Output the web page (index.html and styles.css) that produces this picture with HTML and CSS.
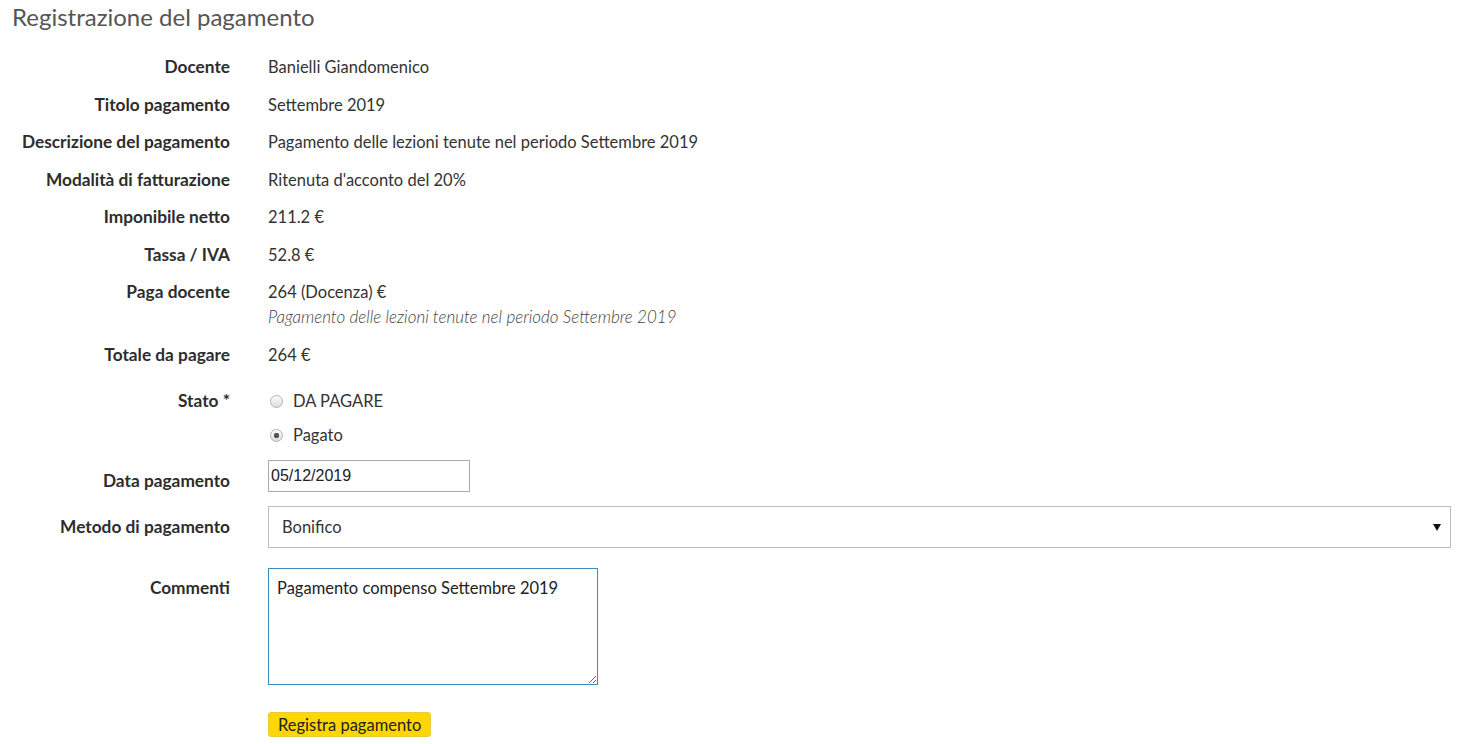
FILE: index.html
```html
<!doctype html>
<html>
<head>
  <title>Registrazione del pagamento</title>
  <link rel="stylesheet" href="styles.css">
</head>
<body>
  <div class="page">
    <h1 class="page-title">Registrazione del pagamento</h1>
    <form class="payment-form">
      <div class="info-rows">
        <div class="row"><div class="row-label">Docente</div><div class="row-value">Banielli Giandomenico</div></div>
        <div class="row"><div class="row-label">Titolo pagamento</div><div class="row-value">Settembre 2019</div></div>
        <div class="row"><div class="row-label">Descrizione del pagamento</div><div class="row-value">Pagamento delle lezioni tenute nel periodo Settembre 2019</div></div>
        <div class="row"><div class="row-label">Modalità di fatturazione</div><div class="row-value">Ritenuta d'acconto del 20%</div></div>
        <div class="row"><div class="row-label">Imponibile netto</div><div class="row-value">211.2 €</div></div>
        <div class="row"><div class="row-label">Tassa / IVA</div><div class="row-value">52.8 €</div></div>
        <div class="row">
          <div class="row-label">Paga docente</div>
          <div class="row-value">
            <div>264 (Docenza) €</div>
            <div class="row-note">Pagamento delle lezioni tenute nel periodo Settembre 2019</div>
          </div>
        </div>
        <div class="row"><div class="row-label">Totale da pagare</div><div class="row-value">264 €</div></div>
      </div>

      <div class="row row-state">
        <div class="row-label">Stato *</div>
        <div class="row-value radio-list">
          <label class="radio-option"><input type="radio" name="stato" value="da_pagare"> DA PAGARE</label>
          <label class="radio-option"><input type="radio" name="stato" value="pagato" checked> Pagato</label>
        </div>
      </div>

      <div class="row row-date">
        <div class="row-label">Data pagamento</div>
        <div class="row-value"><input class="date-input" type="text" value="05/12/2019"></div>
      </div>

      <div class="row row-method">
        <div class="row-label">Metodo di pagamento</div>
        <div class="row-value">
          <div class="select-wrap">
            <select class="method-select">
              <option>Bonifico</option>
              <option>Contanti</option>
              <option>Assegno</option>
            </select>
          </div>
        </div>
      </div>

      <div class="row row-comments">
        <div class="row-label">Commenti</div>
        <div class="row-value"><textarea class="comments">Pagamento compenso Settembre 2019</textarea></div>
      </div>

      <div class="row row-submit">
        <div class="row-label"></div>
        <div class="row-value"><button type="button" class="submit-button">Registra pagamento</button></div>
      </div>
    </form>
  </div>
</body>
</html>
```

FILE: styles.css
```css
body {
  margin: 0;
  padding: 0;
  background: #fff;
  color: #333;
  font: 400 16.5px/22px Lato, "Open Sans", sans-serif;
}
body * {
  box-sizing: border-box;
}
.page {
  padding: 0 22px 0 12px;
}
.page-title {
  margin: 0;
  padding-top: 2px;
  font-size: 24px;
  line-height: 30px;
  font-weight: 400;
  color: #555;
}
.payment-form {
  margin-top: 24px;
}
.info-rows {
  display: flex;
  flex-direction: column;
  gap: 15.5px;
}
.row {
  display: flex;
  align-items: flex-start;
}
.row-label {
  width: 218px;
  flex: 0 0 218px;
  margin-right: 38px;
  text-align: right;
  font-size: 17.3px;
  font-weight: 700;
  color: #2d2d2d;
}
.row-value {
  flex: 1 1 auto;
}
.row-note {
  margin-top: 3px;
  font-style: italic;
  font-weight: 300;
  color: #444;
  font-size: 17px;
}

/* stato */
.row-state {
  margin-top: 18.5px;
}
.row-state .row-label {
  padding-top: 6px;
}
.radio-list {
  display: flex;
  flex-direction: column;
}
.radio-option {
  display: flex;
  align-items: center;
  height: 34px;
  padding-left: 2px;
}
.radio-option input {
  -webkit-appearance: none;
  appearance: none;
  width: 13px;
  height: 13px;
  margin: 0 10px 0 0;
  border: 1px solid #b4b4b4;
  border-radius: 50%;
  background: linear-gradient(#fdfdfd, #dcdcdc);
}
.radio-option input:checked {
  background: radial-gradient(circle, #555 0 2.5px, transparent 3px), linear-gradient(#fdfdfd, #dcdcdc);
}

/* data */
.row-date {
  margin-top: 8px;
}
.row-date .row-label {
  padding-top: 10px;
}
.date-input {
  width: 202px;
  height: 32px;
  border: 1px solid #a9a9a9;
  padding: 0 2px;
  font: 16px "Liberation Sans", Arial, sans-serif;
  color: #222;
}

/* metodo */
.row-method {
  margin-top: 14px;
}
.row-method .row-label {
  padding-top: 10px;
}
.select-wrap {
  position: relative;
}
.select-wrap::after {
  content: "";
  position: absolute;
  right: 10px;
  top: 18px;
  border-left: 4px solid transparent;
  border-right: 4px solid transparent;
  border-top: 7px solid #111;
  pointer-events: none;
}
.method-select {
  -webkit-appearance: none;
  appearance: none;
  width: 100%;
  height: 42px;
  padding: 0 13px;
  border: 1px solid #bdbdbd;
  border-radius: 0;
  background: #fff;
  color: #333;
  font: 400 16.5px Lato, "Open Sans", sans-serif;
}

/* commenti */
.row-comments {
  margin-top: 20px;
}
.row-comments .row-label {
  padding-top: 9px;
}
.comments {
  display: block;
  width: 330px;
  height: 117px;
  padding: 8px;
  border: 1px solid #3c8dbc;
  color: #222;
  font: 400 16.5px/22px Lato, "Open Sans", sans-serif;
  outline: none;
}

/* invio */
.row-submit {
  margin-top: 27px;
}
.submit-button {
  height: 25px;
  padding: 0 9px;
  border: 1px solid #eacb3a;
  border-radius: 3px;
  background: #ffd700;
  color: #222;
  font: 400 16.5px Lato, "Open Sans", sans-serif;
}
```
